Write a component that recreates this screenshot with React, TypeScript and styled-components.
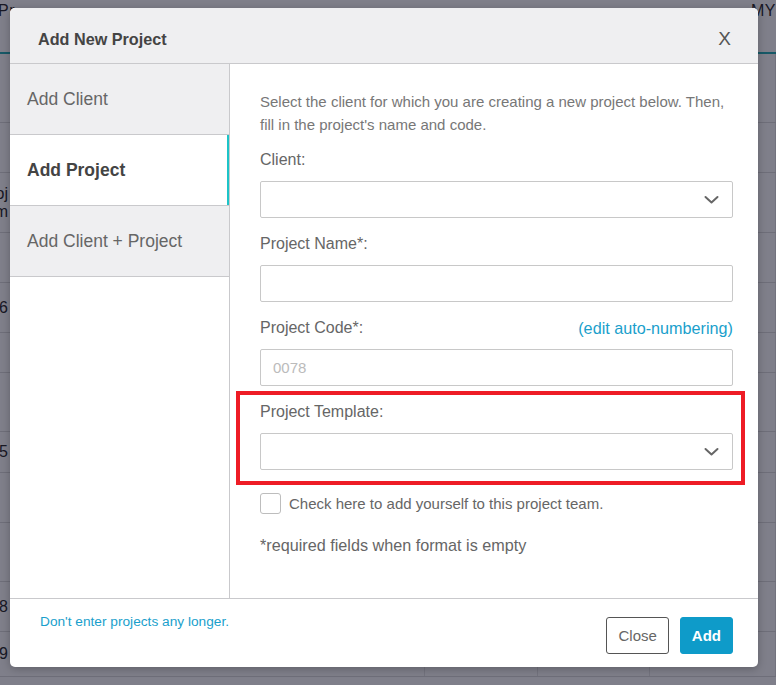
import React from "react";
import styled, { createGlobalStyle } from "styled-components";

const GlobalStyle = createGlobalStyle`
  html, body {
    margin: 0;
    padding: 0;
    background: #ffffff;
  }
  body {
    font-family: "Liberation Sans", Arial, sans-serif;
  }
  * {
    box-sizing: border-box;
  }
`;

const Page = styled.div`
  position: relative;
  width: 776px;
  height: 685px;
  overflow: hidden;
  background: #ffffff;
`;

/* the project list that sits behind the dialog */
const TableHead = styled.div`
  display: flex;
  justify-content: space-between;
  align-items: flex-start;
  height: 54px;
  padding: 2px 0 0;
  border-bottom: 2px solid #2fb3b8;
  font-size: 16px;
  color: #333;
`;

const HeadCell = styled.span<{ $shift?: number }>`
  margin-left: ${(p) => p.$shift ?? 0}px;
  letter-spacing: 0.5px;
`;

const Row = styled.div<{ $h: number }>`
  display: grid;
  grid-template-columns: 72px 353px 113px 112px 1fr;
  height: ${(p) => p.$h}px;
  border-bottom: 1px solid #dcdcdc;
  font-size: 16px;
  color: #333;
`;

const Cell = styled.div`
  display: flex;
  align-items: center;
  border-right: 1px solid #e6e6e6;
  overflow: hidden;
  line-height: 18px;
`;

const FirstCell = styled(Cell)`
  flex-direction: column;
  justify-content: center;
  align-items: flex-end;
  margin-left: -40px;
  width: 48px;
  border-right: 0;
`;

const Backdrop = styled.div`
  position: absolute;
  inset: 0;
  background: rgba(0, 0, 21, 0.5);
`;

/* dialog */
const Modal = styled.div`
  position: absolute;
  left: 10px;
  top: 8px;
  width: 748px;
  height: 659px;
  display: flex;
  flex-direction: column;
  background: #ffffff;
  border-radius: 5px;
  overflow: hidden;
  box-shadow: 0 2px 8px rgba(0, 0, 0, 0.25);
`;

const Header = styled.div`
  display: flex;
  align-items: center;
  justify-content: space-between;
  height: 56px;
  padding: 7px 27px 0 28px;
  background: #efeff1;
  border-bottom: 1px solid #c9c9cc;
`;

const Title = styled.h2`
  margin: 0;
  font-size: 16.2px;
  font-weight: 700;
  color: #444;
`;

const CloseX = styled.button`
  border: 0;
  background: none;
  padding: 0;
  font-family: inherit;
  font-size: 19px;
  color: #555;
  cursor: pointer;
`;

const Body = styled.div`
  flex: 1;
  display: flex;
  min-height: 0;
`;

const Sidebar = styled.nav`
  width: 220px;
  flex-shrink: 0;
  border-right: 1px solid #c9c9cc;
`;

const Tab = styled.div<{ $active?: boolean }>`
  display: flex;
  align-items: center;
  height: 71px;
  padding-left: 17px;
  border-bottom: 1px solid #c9c9cc;
  background: ${(p) => (p.$active ? "#ffffff" : "#efeff1")};
  box-shadow: ${(p) => (p.$active ? "inset -2px 0 0 #1cc4c8" : "none")};
  font-size: 17.5px;
  font-weight: ${(p) => (p.$active ? 700 : 400)};
  color: ${(p) => (p.$active ? "#444" : "#666")};
`;

const Content = styled.div`
  flex: 1;
  padding: 26px 25px 0 30px;
`;

const Intro = styled.p`
  margin: 0 0 13px;
  font-size: 15px;
  line-height: 23px;
  color: #777;
`;

const Field = styled.div<{ $highlight?: boolean }>`
  position: relative;
  margin-bottom: 15px;

  ${(p) =>
    p.$highlight &&
    `
    &::after {
      content: "";
      position: absolute;
      top: -10px;
      bottom: -15px;
      left: -24px;
      right: -12px;
      border: 4px solid #ee1c25;
      pointer-events: none;
    }
  `}
`;

const LabelRow = styled.div`
  display: flex;
  justify-content: space-between;
  align-items: center;
  height: 22px;
  margin-bottom: 10px;
`;

const Label = styled.label`
  font-size: 16px;
  color: #666;
`;

const Link = styled.a`
  font-size: 16.2px;
  color: #1a9fcc;
  text-decoration: none;
  cursor: pointer;
`;

const Box = styled.div`
  position: relative;
  display: flex;
  align-items: center;
  height: 37px;
  padding: 0 12px;
  border: 1px solid #c8c8c8;
  border-radius: 2px;
  background: #ffffff;
`;

const Placeholder = styled.span`
  font-size: 15px;
  color: #bbb;
`;

const Chevron = styled.svg`
  position: absolute;
  right: 13px;
  top: 50%;
  transform: translateY(-50%);
`;

const CheckRow = styled.div`
  display: flex;
  align-items: center;
  gap: 8px;
  margin-top: 23px;
`;

const CheckBox = styled.span`
  width: 21px;
  height: 21px;
  border: 1px solid #bdbdbd;
  border-radius: 3px;
  background: #fff;
`;

const CheckText = styled.span`
  font-size: 15px;
  color: #666;
`;

const Note = styled.p`
  margin: 20px 0 0;
  font-size: 16.2px;
  line-height: 22px;
  color: #666;
`;

const Footer = styled.div`
  display: flex;
  justify-content: space-between;
  align-items: flex-start;
  height: 69px;
  padding: 15px 25px 0 30px;
  border-top: 1px solid #c9c9cc;
`;

const FooterLink = styled(Link)`
  font-size: 13.7px;
  line-height: 16px;
`;

const Buttons = styled.div`
  display: flex;
  gap: 11px;
  margin-top: 3px;
`;

const Button = styled.button<{ $primary?: boolean }>`
  height: 37px;
  padding: 0 11px;
  border-radius: 3px;
  border: 1px solid ${(p) => (p.$primary ? "#0e9bc9" : "#555")};
  background: ${(p) => (p.$primary ? "#0e9bc9" : "#fff")};
  color: ${(p) => (p.$primary ? "#fff" : "#666")};
  font-family: inherit;
  font-size: 15px;
  font-weight: ${(p) => (p.$primary ? 700 : 400)};
  cursor: pointer;
`;

const rows: { h: number; first: string[] }[] = [
  { h: 69, first: [] },
  { h: 50, first: [] },
  { h: 60, first: ["Proj", "Nam"] },
  { h: 50, first: [] },
  { h: 50, first: ["00076"] },
  { h: 40, first: [] },
  { h: 59, first: [] },
  { h: 41, first: ["00075"] },
  { h: 50, first: [] },
  { h: 59, first: [] },
  { h: 50, first: ["00078"] },
  { h: 45, first: ["00079"] },
];

function ChevronIcon() {
  return (
    <Chevron width="15" height="9" viewBox="0 0 15 9" fill="none">
      <polyline
        points="1.5,1.5 7.5,7 13.5,1.5"
        stroke="#666"
        strokeWidth="2"
        strokeLinecap="round"
        strokeLinejoin="round"
      />
    </Chevron>
  );
}

export default function App() {
  return (
    <Page>
      <GlobalStyle />
      <TableHead>
        <HeadCell $shift={-2}>Pr</HeadCell>
        <HeadCell>MY</HeadCell>
      </TableHead>
      {rows.map((r, i) => (
        <Row key={i} $h={r.h}>
          <FirstCell>
            {r.first.map((t) => (
              <span key={t}>{t}</span>
            ))}
          </FirstCell>
          <Cell />
          <Cell />
          <Cell />
          <Cell />
        </Row>
      ))}
      <Backdrop />

      <Modal>
        <Header>
          <Title>Add New Project</Title>
          <CloseX>X</CloseX>
        </Header>
        <Body>
          <Sidebar>
            <Tab>Add Client</Tab>
            <Tab $active>Add Project</Tab>
            <Tab>Add Client + Project</Tab>
          </Sidebar>
          <Content>
            <Intro>
              Select the client for which you are creating a new project below. Then, fill in the project's name and
              code.
            </Intro>
            <Field>
              <LabelRow>
                <Label>Client:</Label>
              </LabelRow>
              <Box>
                <ChevronIcon />
              </Box>
            </Field>
            <Field>
              <LabelRow>
                <Label>Project Name*:</Label>
              </LabelRow>
              <Box />
            </Field>
            <Field>
              <LabelRow>
                <Label>Project Code*:</Label>
                <Link>(edit auto-numbering)</Link>
              </LabelRow>
              <Box>
                <Placeholder>0078</Placeholder>
              </Box>
            </Field>
            <Field $highlight>
              <LabelRow>
                <Label>Project Template:</Label>
              </LabelRow>
              <Box>
                <ChevronIcon />
              </Box>
            </Field>
            <CheckRow>
              <CheckBox />
              <CheckText>Check here to add yourself to this project team.</CheckText>
            </CheckRow>
            <Note>*required fields when format is empty</Note>
          </Content>
        </Body>
        <Footer>
          <FooterLink>Don't enter projects any longer.</FooterLink>
          <Buttons>
            <Button>Close</Button>
            <Button $primary>Add</Button>
          </Buttons>
        </Footer>
      </Modal>
    </Page>
  );
}
